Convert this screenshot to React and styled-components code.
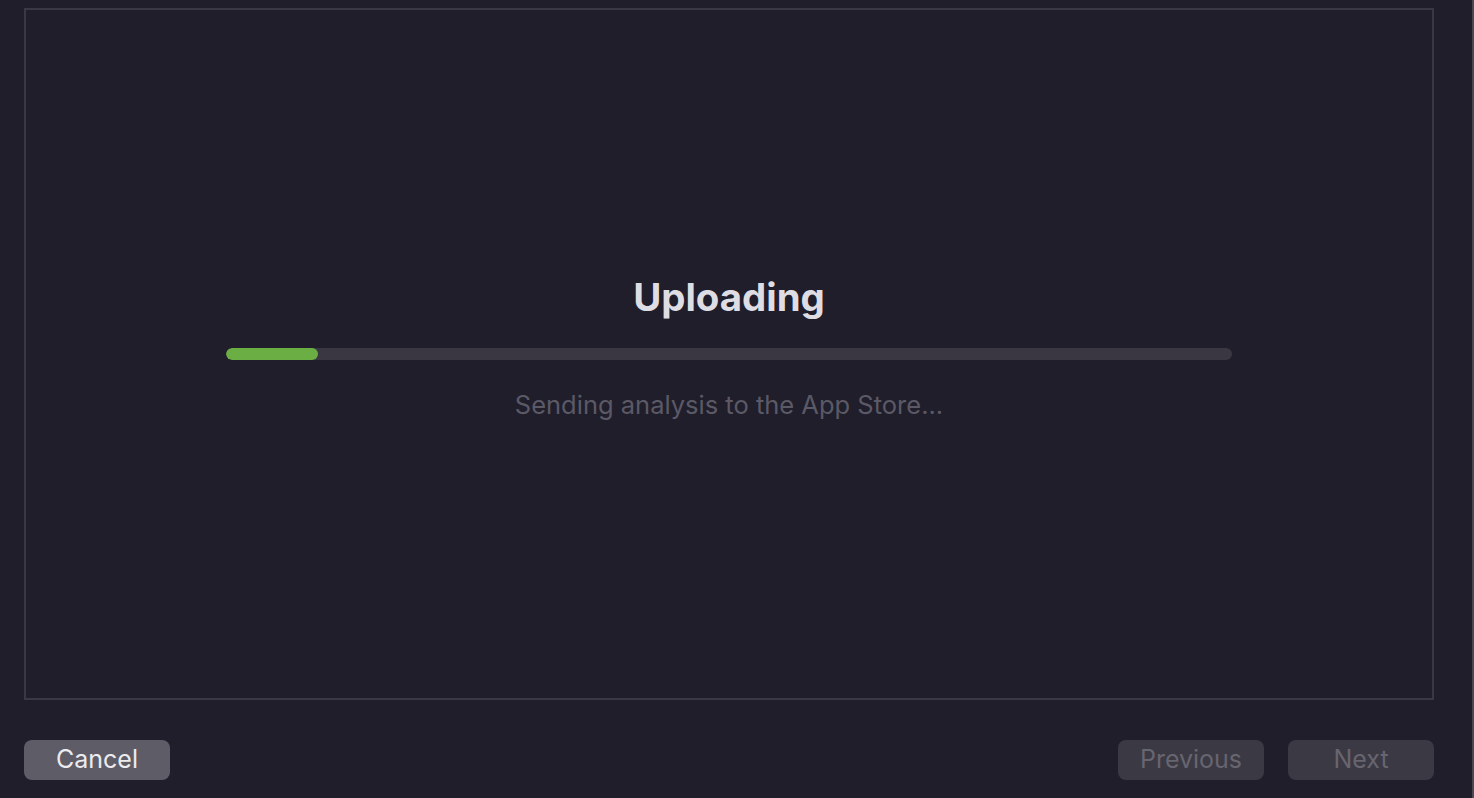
import React from "react";
import styled, { createGlobalStyle } from "styled-components";

const GlobalStyle = createGlobalStyle`
    html, body {
        margin: 0;
        padding: 0;
        background-color: #201e2b;
    }
    body {
        font-family: Inter, "Noto Sans", "Liberation Sans", sans-serif;
        -webkit-font-smoothing: antialiased;
    }
`

const Page = styled.div`
    box-sizing: border-box;
    width: 1474px;
    height: 798px;
    display: flex;
    flex-direction: column;
    padding: 8px 38px 18px 24px;
    background-color: #201e2b;
    border-right: 2px solid #4a4853;
`

const Panel = styled.div`
    flex: 1;
    display: grid;
    grid-template-rows: 1fr auto 1fr;
    justify-items: center;
    border: 2px solid #3a3844;
`

const Title = styled.h1`
    align-self: end;
    margin: 0 0 32px;
    font-size: 38.4px;
    font-weight: 700;
    line-height: 1;
    color: #dedde3;
`

const Track = styled.div`
    width: 1006px;
    height: 12px;
    border-radius: 6px;
    background-color: #3a3742;
    overflow: hidden;
`

const Fill = styled.div`
    height: 100%;
    border-radius: 6px;
    background-color: #6aae44;
`

const Status = styled.p`
    align-self: start;
    margin: 30px 0 0;
    font-size: 25.5px;
    line-height: 1.2;
    color: #5b5966;
`

const Footer = styled.div`
    display: flex;
    align-items: center;
    gap: 24px;
    margin-top: 40px;
`

const Spacer = styled.div`
    flex: 1;
`

const Button = styled.button`
    width: 146px;
    height: 40px;
    padding: 0 0 2px;
    border: none;
    border-radius: 8px;
    font-family: inherit;
    font-size: 25px;
    background-color: ${props => props.primary ? "#5e5c66" : "#3b3944"};
    color: ${props => props.primary ? "#ecebef" : "#67656f"};
`

const App = () => {
    const progress = 92;

    return (
        <>
            <GlobalStyle />
            <Page>
                <Panel>
                    <Title>Uploading</Title>
                    <Track>
                        <Fill style={{ width: `${progress}px` }} />
                    </Track>
                    <Status>Sending analysis to the App Store...</Status>
                </Panel>
                <Footer>
                    <Button primary>Cancel</Button>
                    <Spacer />
                    <Button disabled>Previous</Button>
                    <Button disabled>Next</Button>
                </Footer>
            </Page>
        </>
    );
};

export default App;
